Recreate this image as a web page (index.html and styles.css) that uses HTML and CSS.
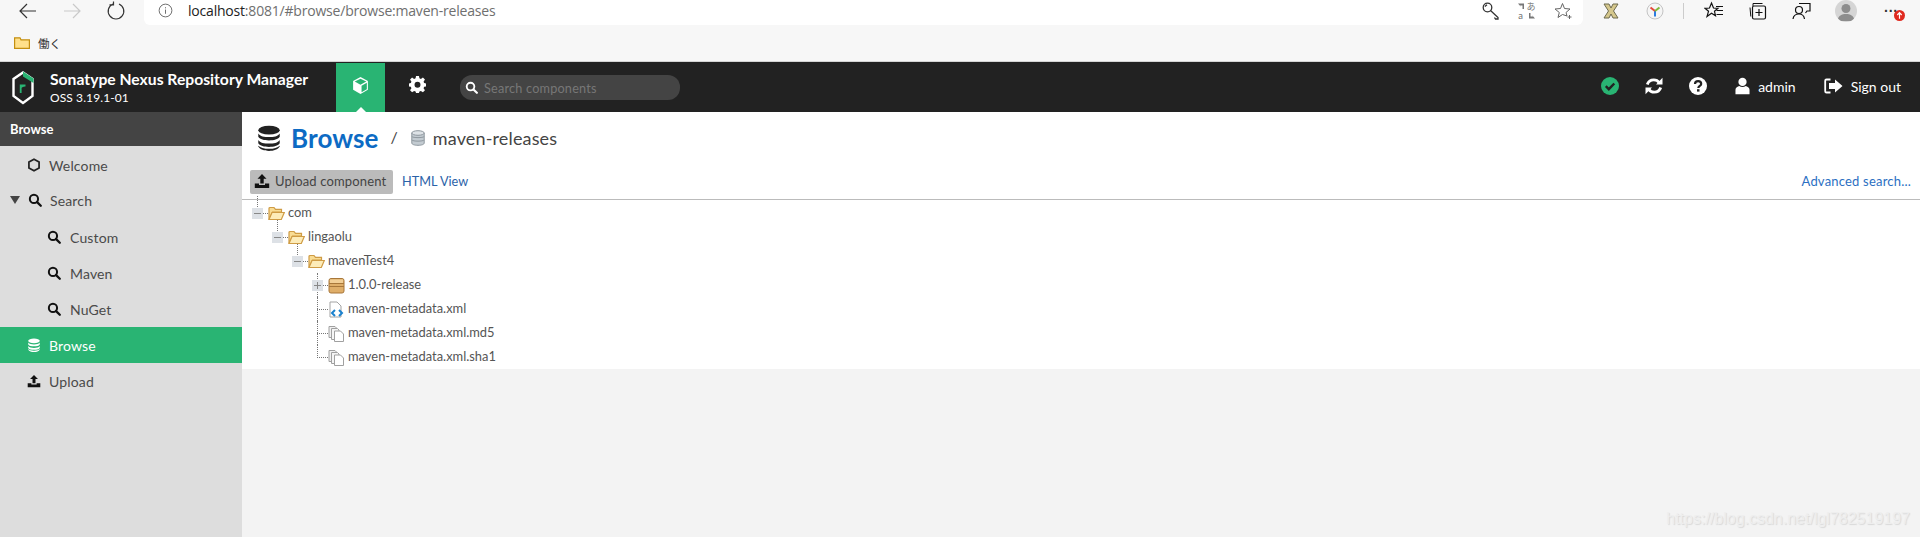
FILE: index.html
```html
<!DOCTYPE html>
<html lang="en">
<head>
<meta charset="utf-8">
<title>Nexus Repository Manager</title>
<link rel="stylesheet" href="styles.css">
</head>
<body>
<svg class="defs" width="0" height="0" aria-hidden="true">
  <symbol id="i-search" viewBox="0 0 16 16"><circle cx="6.800" cy="6.800" r="4.700" fill="none" stroke="currentColor" stroke-width="2.300"/><path d="M10.400 10.400 14.600 14.600" stroke="currentColor" stroke-width="2.600" stroke-linecap="round"/></symbol>
  <symbol id="i-db" viewBox="0 0 16 16"><ellipse cx="8" cy="3.200" rx="6.600" ry="2.700" fill="currentColor"/><path fill="currentColor" d="M1.400 5.200C2.600 7 5 7.400 8 7.400s5.400-.4 6.600-2.200V7.300C13.500 9 11 9.500 8 9.500S2.500 9 1.400 7.300ZM1.400 9.200C2.600 11 5 11.400 8 11.400s5.400-.4 6.600-2.200v2.100C13.500 13 11 13.500 8 13.500S2.500 13 1.400 11.300ZM1.400 12.700C2.600 14 5 14.600 8 14.600s5.400-.6 6.600-1.900v.6C13.500 15.200 11 16 8 16s-5.500-.8-6.600-2.700Z"/></symbol>
  <symbol id="i-upload" viewBox="0 0 16 16"><path fill="currentColor" d="M8 1 12.500 5.800H9.700V10.500H6.300V5.800H3.500ZM.8 10.500H5V12H11V10.500H15.200V15H.8Z"/></symbol>
  <symbol id="i-folder" viewBox="0 0 17 15"><path d="M1 13.500V2.500C1 1.800 1.500 1.500 2 1.500H6L7.500 3.300H13.500V6H4.500Z" fill="#f9dc93" stroke="#cf9c45" stroke-width="1.200"/><path d="M1 13.500 4 6.500H16.300L13.300 13.500Z" fill="#fdecb9" stroke="#cf9c45" stroke-width="1.200"/></symbol>
  <symbol id="i-doc" viewBox="0 0 17 17"><path d="M1 12.500V1.500H7L8.500 3V12.500Z" fill="#f0f0f0" stroke="#a0a0a0"/><path d="M3.500 14.500V3.500H9.500L11 5V14.500Z" fill="#f5f5f5" stroke="#a0a0a0"/><path d="M6.500 16.500V6H12.500L15.500 9V16.500Z" fill="#fff" stroke="#a0a0a0"/></symbol>
</svg>

<header class="browser">
  <div class="browser-top">
    <nav class="browser-nav">
      <svg class="bi" viewBox="0 0 20 20"><path d="M18 10H2M9 3 2 10l7 7" fill="none" stroke="#333" stroke-width="1.200"/></svg>
      <svg class="bi" viewBox="0 0 20 20"><path d="M2 10H18M11 3 18 10l-7 7" fill="none" stroke="#c9c9c9" stroke-width="1.200"/></svg>
      <svg class="bi" viewBox="0 0 20 20"><path d="M7 3A7.800 7.800 0 1 0 13 3M7.500 .5V3.800H3.500" fill="none" stroke="#333" stroke-width="1.200"/></svg>
    </nav>
    <div class="address">
      <svg class="info" viewBox="0 0 16 16"><circle cx="8" cy="8" r="6.800" fill="none" stroke="#666"/><path d="M8 7V11.500M8 4.500V5.700" stroke="#666"/></svg>
      <span class="url"><b>localhost</b>:8081/#browse/browse:maven-releases</span>
      <div class="address-tools">
        <svg class="bi" viewBox="0 0 20 20"><circle cx="6.500" cy="6.500" r="4.300" fill="none" stroke="#333" stroke-width="1.300"/><path d="M9.500 9.500 17 16.500V18H14.500L13.500 16.500M3.800 5.500 6 3.800" fill="none" stroke="#333" stroke-width="1.300"/></svg>
        <svg class="bi" viewBox="0 0 20 20"><path d="M1 2.500H7V8H5.500V4.500H3L4.500 6.500ZM18 17.500H12V12H13.500V15.500H16L14.500 13.500Z" fill="#777"/><text x="9.500" y="9" class="tr-glyph">あ</text><text x="1" y="18" class="tr-glyph">a</text></svg>
        <svg class="bi" viewBox="0 0 20 20"><path d="M9.500 2.500 11.500 7.500 17 8 13 11.500 14 15 9.500 13.500 5 16.500 6.300 11.500 2 8 7.500 7.500Z" fill="none" stroke="#666"/><path d="M14.500 16H18.500M16.500 14V18" stroke="#666"/></svg>
      </div>
    </div>
    <div class="browser-tools">
      <svg class="bi ext" viewBox="0 0 20 20"><path d="M3 3H8L10 7 12 3H17L12.500 10 17 17H12L10 13 8 17H3L7.500 10Z" fill="#d5c78c" stroke="#6d6a4e"/></svg>
      <svg class="bi ext" viewBox="0 0 20 20"><circle cx="10" cy="10" r="8" fill="#f5f5f5" stroke="#c4c4c4"/><path d="M10 10V15.500" stroke="#2a7ce0" stroke-width="2"/><path d="M10 10 5.500 6.500" stroke="#e5483b" stroke-width="2"/><path d="M10 10 14.500 6.500" stroke="#7fb83a" stroke-width="2"/></svg>
      <span class="tool-sep"></span>
      <svg class="bi" viewBox="0 0 20 20"><path d="M7.500 2 9.500 7 14 7.300 10.500 10.300 11.500 14.800 7.500 12.300 3 15.500 4.500 10.300 1 7.300 5.500 7Z" fill="none" stroke="#111" stroke-width="1.200"/><path d="M12 5.500H19M12.500 9.500H19M12.500 13.500H19" stroke="#111" stroke-width="1.200"/></svg>
      <svg class="bi" viewBox="0 0 20 20"><path d="M5 5V2.500H14.500M2 6.500 2.800 15.500" fill="none" stroke="#111"/><rect x="4.500" y="5" width="13" height="13" rx="1.500" fill="#f7f7f7" stroke="#111" stroke-width="1.200"/><path d="M11 8V15M7.500 11.500H14.500" stroke="#111" stroke-width="1.200"/></svg>
      <svg class="bi" viewBox="0 0 20 20"><circle cx="7" cy="9" r="3.500" fill="none" stroke="#111" stroke-width="1.200"/><path d="M1 18C1.500 14.500 4 13 7 13S12 14.500 12.500 18M7 2.500H18V10H15L13.500 12" fill="none" stroke="#111" stroke-width="1.200"/></svg>
      <span class="avatar"><svg viewBox="0 0 22 22"><circle cx="11" cy="8.500" r="4.500" fill="#8d8d8d"/><path d="M2.500 21C3 15.500 7 14 11 14S19 15.500 19.500 21Z" fill="#8d8d8d"/></svg></span>
      <span class="more">···<svg class="update" viewBox="0 0 11 11"><circle cx="5.500" cy="5.500" r="5.500" fill="#e02a20"/><path d="M5.500 8.800V3M3.300 5 5.500 2.700 7.700 5" fill="none" stroke="#fff" stroke-width="1.200"/></svg></span>
    </div>
  </div>
  <div class="bookmarks">
    <svg class="bm-folder" viewBox="0 0 16 12"><path d="M.6 11.400V.8H6L7 2.800H15.400V11.400Z" fill="#ffe08a" stroke="#c48f10" stroke-width="1.200"/></svg>
    <span class="bm-text">働く</span>
  </div>
</header>

<div class="app-bar">
  <div class="brand">
    <svg class="logo" viewBox="0 0 22 34"><path d="M11 1.500 20.500 8V25L11 32 1.500 25V8Z" fill="none" stroke="#fff" stroke-width="2.400"/><path d="M11 .5 21.500 7.500V12L11 5.500Z" fill="#29b473"/><path d="M8.700 22V14.500H13.500M8.700 16.500C9.500 15 11 14.500 13 14.500" fill="none" stroke="#29b473" stroke-width="1.800"/></svg>
    <div class="brand-text">
      <div class="brand-name">Sonatype Nexus Repository Manager</div>
      <div class="brand-ver">OSS 3.19.1-01</div>
    </div>
  </div>
  <a class="mode mode-active">
    <svg viewBox="0 0 16 18"><path d="M8 1 15 4.800V13L8 17 1 13V4.800Z" fill="#fff"/><path d="M8 8.300 2.500 5.300 8 2.500 13.500 5.300Z" fill="#29b473"/><path d="M9 9.300 14 6.500V12.500L9 15.300Z" fill="#29b473"/></svg>
  </a>
  <a class="mode mode-admin">
    <svg viewBox="0 0 16 16"><path fill="#fff" fill-rule="evenodd" d="M6.600 0H9.400L9.800 2.200 11.200 2.800 13.100 1.500 15 3.400 13.700 5.300 14.300 6.700 16 7V9.800L14.300 10.100 13.700 11.500 15 13.400 13.100 15.300 11.200 14 9.800 14.600 9.400 16H6.600L6.200 14.600 4.800 14 2.900 15.300 1 13.400 2.300 11.500 1.700 10.100 0 9.800V7L1.700 6.700 2.300 5.300 1 3.400 2.900 1.500 4.800 2.800 6.200 2.200ZM8 5.500A2.800 2.800 0 1 0 8 11.100 2.800 2.800 0 1 0 8 5.500Z"/></svg>
  </a>
  <div class="search">
    <svg class="search-icon"><use href="#i-search"/></svg>
    <span class="search-ph">Search components</span>
  </div>
  <div class="bar-right">
    <svg class="bar-icon" viewBox="0 0 18 18"><circle cx="9" cy="9" r="9" fill="#29b473"/><path d="M4.800 9.200 7.800 12.200 13.300 6.500" fill="none" stroke="#222" stroke-width="2.400"/></svg>
    <svg class="bar-icon" viewBox="0 0 18 18"><path fill="none" stroke="#fff" stroke-width="2.800" d="M2.300 7.500C3.200 4.500 5.800 2.800 8.800 2.800c2.400 0 4.200 1 5.400 2.800M15.700 10.500C14.800 13.500 12.200 15.200 9.200 15.200c-2.400 0-4.200-1-5.400-2.800"/><path fill="#fff" d="M17.500.8V7.500H11ZM.5 17.200V10.500H7Z"/></svg>
    <svg class="bar-icon bar-icon-last" viewBox="0 0 18 18"><circle cx="9" cy="9" r="9" fill="#fff"/><path d="M6 7C6 5 7.500 4.200 9.100 4.200 11 4.200 12.200 5.400 12.200 6.900 12.200 8.900 9.300 9 9.300 11" fill="none" stroke="#222" stroke-width="2.200"/><rect x="8" y="12.200" width="2.500" height="2.400" fill="#222"/></svg>
    <span class="user">
      <svg class="user-icon" viewBox="0 0 16 18"><circle cx="8" cy="4.600" r="4.400" fill="#fff"/><path d="M.5 17.900V13C.5 10.500 3 9.500 4.500 9 6.500 10.500 9.500 10.500 11.500 9 13 9.500 15.500 10.500 15.500 13V17.900Z" fill="#fff"/></svg>
      <span class="user-name">admin</span>
    </span>
    <span class="signout">
      <svg class="signout-icon" viewBox="0 0 19 16"><path d="M6.500 1.500H2.500C1.700 1.500 1.200 2 1.200 2.800V13.200C1.200 14 1.700 14.500 2.500 14.500H6.500" fill="none" stroke="#fff" stroke-width="1.800"/><path d="M11 1.500 18.500 8 11 14.500V11H5V5H11Z" fill="#fff"/></svg>
      <span>Sign out</span>
    </span>
  </div>
</div>

<div class="workspace">
  <aside class="sidebar">
    <div class="side-title">Browse</div>
    <ul class="side-list">
      <li class="side-item">
        <svg class="side-icon" viewBox="0 0 14 16"><path d="M7 1.300 12.800 4.600V11.400L7 14.700 1.200 11.400V4.600Z" fill="none" stroke="#222" stroke-width="2"/></svg>
        <span>Welcome</span>
      </li>
      <li class="side-item side-parent">
        <i class="caret"></i>
        <svg class="side-icon"><use href="#i-search"/></svg>
        <span>Search</span>
      </li>
      <li class="side-item side-child"><svg class="side-icon"><use href="#i-search"/></svg><span>Custom</span></li>
      <li class="side-item side-child"><svg class="side-icon"><use href="#i-search"/></svg><span>Maven</span></li>
      <li class="side-item side-child"><svg class="side-icon"><use href="#i-search"/></svg><span>NuGet</span></li>
      <li class="side-item side-active"><svg class="side-icon"><use href="#i-db"/></svg><span>Browse</span></li>
      <li class="side-item"><svg class="side-icon"><use href="#i-upload"/></svg><span>Upload</span></li>
    </ul>
  </aside>
  <main class="main">
    <section class="panel">
      <div class="crumbs">
        <svg class="crumb-icon"><use href="#i-db"/></svg>
        <h1 class="crumb-title">Browse</h1>
        <span class="crumb-sep">/</span>
        <svg class="repo-icon" viewBox="0 0 14 16"><path d="M.8 3V13C.8 14.500 3.500 15.300 7 15.300S13.200 14.500 13.200 13V3Z" fill="#c3cbd1" stroke="#8e979e"/><ellipse cx="7" cy="3" rx="6.200" ry="2.300" fill="#dde2e6" stroke="#8e979e"/><path d="M.8 6.500C2 8 12 8 13.200 6.500M.8 10C2 11.500 12 11.500 13.200 10" fill="none" stroke="#8e979e"/></svg>
        <span class="crumb-repo">maven-releases</span>
      </div>
      <div class="toolbar">
        <button class="btn-upload" type="button"><svg class="btn-icon"><use href="#i-upload"/></svg>Upload component</button>
        <a class="link-html">HTML View</a>
        <a class="link-adv">Advanced search...</a>
      </div>
      <div class="tree">
        <div class="node lv0"><span class="exp"><i class="stem stem-top"></i><i class="hook"></i><i class="box"></i><i class="minus"></i></span><svg class="node-icon"><use href="#i-folder"/></svg><span class="node-label">com</span></div>
        <div class="node lv1"><span class="exp"><i class="stem stem-top"></i><i class="hook"></i><i class="box"></i><i class="minus"></i></span><svg class="node-icon"><use href="#i-folder"/></svg><span class="node-label">lingaolu</span></div>
        <div class="node lv2"><span class="exp"><i class="stem stem-top"></i><i class="hook"></i><i class="box"></i><i class="minus"></i></span><svg class="node-icon"><use href="#i-folder"/></svg><span class="node-label">mavenTest4</span></div>
        <div class="node lv3"><span class="exp"><i class="stem stem-full"></i><i class="hook"></i><i class="box"></i><i class="minus"></i><i class="plus"></i></span>
          <svg class="node-icon" viewBox="0 0 17 17"><rect x="1" y="1.500" width="15" height="14.500" rx="2" fill="#dfae69" stroke="#a8773a"/><rect x="2" y="2.500" width="13" height="4" fill="#f2cf96"/><path d="M1 6.500H16M1 9.500H16" stroke="#a8773a"/></svg>
          <span class="node-label">1.0.0-release</span></div>
        <div class="node lv3"><span class="exp"><i class="stem stem-full"></i><i class="hook"></i></span>
          <svg class="node-icon" viewBox="0 0 17 17"><path d="M2 1H9L13 5V16H2Z" fill="#fff" stroke="#a3a3a3"/><path d="M7 9 4 12 7 15M11 9 14 12 11 15" fill="none" stroke="#1b82cf" stroke-width="2"/></svg>
          <span class="node-label">maven-metadata.xml</span></div>
        <div class="node lv3"><span class="exp"><i class="stem stem-full"></i><i class="hook"></i></span><svg class="node-icon"><use href="#i-doc"/></svg><span class="node-label">maven-metadata.xml.md5</span></div>
        <div class="node lv3"><span class="exp"><i class="stem stem-end"></i><i class="hook"></i></span><svg class="node-icon"><use href="#i-doc"/></svg><span class="node-label">maven-metadata.xml.sha1</span></div>
      </div>
    </section>
    <div class="rest">
      <span class="watermark">https://blog.csdn.net/lgl782519197</span>
    </div>
  </main>
</div>
</body>
</html>
```

FILE: styles.css
```css
* { box-sizing: border-box; }
html, body { margin: 0; height: 100%; }
body {
  display: flex;
  flex-direction: column;
  height: 537px;
  overflow: hidden;
  font-family: Lato, "Liberation Sans", sans-serif;
  color: #444;
  background: #fff;
}
.defs { position: absolute; }
svg { display: block; flex: none; }

.browser { height: 62px; background: #f7f7f7; border-bottom: 1px solid #d4d4d4; flex: none; }
.browser-top { display: flex; height: 25px; align-items: flex-start; }
.browser-nav { display: flex; width: 144px; padding-left: 18px; gap: 24px; height: 21px; align-items: center; }
.bi { width: 20px; height: 20px; }
.address {
  width: 1439px; height: 25px; background: #fff;
  border-radius: 0 0 6px 6px;
  display: flex; align-items: center;
  padding: 0 10px 4px 14px;
}
.info { width: 15px; height: 15px; }
.url { margin-left: 15px; font: 14px "Open Sans", sans-serif; color: #6f6f6f; letter-spacing: -.2px; white-space: nowrap; }
.url b { font-weight: 400; color: #222; }
.address-tools { margin-left: auto; display: flex; gap: 16px; }
.tr-glyph { font: 9px "Noto Sans CJK JP", sans-serif; fill: #777; }
.browser-tools { display: flex; align-items: center; height: 21px; padding-left: 18px; }
.browser-tools .bi { margin-right: 24px; }
.tool-sep { width: 1px; height: 16px; background: #ccc; margin: 0 20px 0 -6px; }
.avatar { width: 22px; height: 22px; border-radius: 50%; background: #d5d5d5; overflow: hidden; margin: 0 27px 0 -1px; }
.more { position: relative; font: 700 14px "Liberation Sans", sans-serif; color: #333; width: 22px; }
.update { position: absolute; left: 10px; top: 7px; width: 11px; height: 11px; }
.bookmarks { display: flex; align-items: center; height: 36px; padding-left: 14px; gap: 8px; }
.bm-folder { width: 16px; height: 12px; }
.bm-text { font: 11.5px "Noto Sans CJK JP", sans-serif; color: #333; }

.app-bar { height: 50px; background: #222; display: flex; align-items: flex-start; flex: none; }
.brand { width: 336px; display: flex; padding: 8px 0 0 12px; }
.logo { width: 22px; height: 34px; margin-top: 1px; }
.brand-text { margin-left: 16px; color: #fff; }
.brand-name { font-size: 15.7px; font-weight: 700; line-height: 18px; white-space: nowrap; }
.brand-ver { font-size: 12px; letter-spacing: .1px; line-height: 14px; margin-top: 3px; white-space: nowrap; }
.mode { width: 49px; height: 49px; margin-top: 1px; display: flex; align-items: center; justify-content: center; position: relative; }
.mode svg { width: 17px; height: 19px; margin-top: -4px; }
.mode-active { background: #29b473; }
.mode-active::after {
  content: ""; position: absolute; bottom: 0; left: 50%; margin-left: -5px;
  border: 5px solid transparent; border-top: 0; border-bottom-color: #fff;
}
.mode-admin { width: 62px; margin-left: 1px; }
.mode-admin svg { width: 17px; height: 17px; margin-top: -6px; }
.search {
  margin: 13px 0 0 12px; width: 220px; height: 25px; border-radius: 12px; background: #444;
  display: flex; align-items: center; padding-left: 5px; gap: 6px;
}
.search-icon { width: 13px; height: 13px; color: #fff; }
.search-ph { font-size: 12.7px; color: #777; letter-spacing: .2px; }
.bar-right { margin-left: auto; display: flex; align-items: center; height: 48px; color: #fff; padding-right: 19px; }
.bar-icon { width: 18px; height: 18px; margin-right: 26px; }
.bar-icon-last { margin-right: 28px; }
.user { display: flex; align-items: center; gap: 8px; margin-right: 28px; font-size: 14px; }
.user-icon { width: 15px; height: 18px; }
.signout { display: flex; align-items: center; gap: 8px; font-size: 14px; }
.signout-icon { width: 19px; height: 16px; }

.workspace { flex: 1; display: flex; min-height: 0; }
.sidebar { width: 242px; background: #ddd; flex: none; }
.side-title { height: 34px; background: #444; color: #fff; font-size: 13px; font-weight: 700; padding-left: 10px; line-height: 34px; }
.side-list { list-style: none; margin: 0; padding: 1px 0 0; }
.side-item { height: 36px; display: flex; align-items: center; padding-left: 27px; gap: 8px; font-size: 14px; color: #4a4a4a; letter-spacing: .15px; }
.side-icon { width: 14px; height: 14px; color: #111; }
.side-parent { height: 34px; margin-bottom: 2px; padding-left: 10px; gap: 0; }
.side-parent .side-icon { margin-left: 8px; margin-right: 8px; }
.caret { width: 0; height: 0; border: 5px solid transparent; border-bottom: 0; border-top: 8px solid #444; }
.side-child { padding-left: 47px; gap: 9px; }
.side-active { background: #29b473; color: #fff; }
.side-active .side-icon { color: #fff; }

.main { flex: 1; display: flex; flex-direction: column; min-width: 0; }
.panel { height: 257px; background: #fff; flex: none; }
.crumbs { height: 58px; display: flex; align-items: center; padding: 0 0 6px 14px; }
.crumb-icon { width: 26px; height: 28px; color: #222; }
.crumb-title { margin: 0 0 0 9px; font-size: 26px; font-weight: 700; color: #0d6bc4; letter-spacing: .1px; }
.crumb-sep { margin: -4px 13px 0 12px; font-size: 16px; color: #444; }
.repo-icon { width: 14px; height: 16px; margin-right: 8px; }
.crumb-repo { font-size: 18px; color: #444; letter-spacing: .15px; }
.toolbar {
  height: 30px; display: flex; align-items: flex-start; padding: 0 9px 0 8px;
  border-bottom: 1px solid #bbb; font-size: 13px;
}
.btn-upload {
  width: 143px; height: 24px; border: 0; border-radius: 2px; background: #bbb;
  display: flex; align-items: center; gap: 5px; padding: 0 0 2px 4px;
  font: 13px Lato, sans-serif; color: #444; letter-spacing: .15px;
}
.btn-icon { width: 16px; height: 16px; color: #111; }
.link-html { margin-left: 9px; line-height: 22px; font-size: 12.7px; color: #2b62a8; }
.link-adv { margin-left: auto; line-height: 22px; color: #2b6fc2; letter-spacing: .2px; }

.tree { padding-top: 1px; }
.node { height: 24px; display: flex; align-items: center; font-size: 12.9px; color: #555; }
.lv0 { padding-left: 10px; }
.lv1 { padding-left: 30px; }
.lv2 { padding-left: 50px; }
.lv3 { padding-left: 70px; }
.exp { width: 16px; height: 24px; position: relative; flex: none; }
.box, .minus, .plus, .stem, .hook { position: absolute; display: block; }
.stem { left: 5px; width: 0; border-left: 1px dotted #777; }
.stem-top { top: -5px; height: 13px; }
.stem-full { top: 0; height: 24px; }
.stem-end { top: 0; height: 13px; }
.hook { left: 5px; top: 12px; width: 11px; height: 0; border-top: 1px dotted #777; }
.box { left: 0; top: 7px; width: 11px; height: 11px; background: #dde1e6; }
.minus { left: 2px; top: 12px; width: 7px; height: 1px; background: #888; }
.plus { left: 5px; top: 9px; width: 1px; height: 7px; background: #888; }
.node-icon { width: 17px; height: 17px; }
.node-label { margin: -2px 0 0 3px; white-space: nowrap; }

.rest { flex: 1; background: #f3f3f3; display: flex; align-items: flex-end; justify-content: flex-end; padding: 0 10px 9px 0; }
.watermark { font: 16px "Liberation Sans", sans-serif; color: #eee; text-shadow: 1px 1px 1px #d8d8d8; }
```
